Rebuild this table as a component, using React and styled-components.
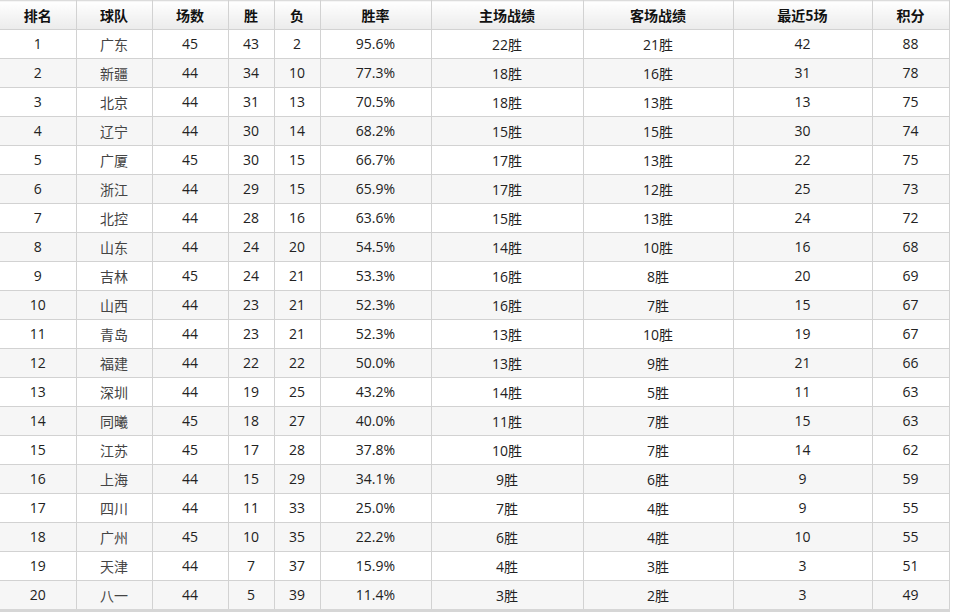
import React from "react";
import styled, { createGlobalStyle } from "styled-components";

const Global = createGlobalStyle`
  html, body { margin: 0; padding: 0; background: #fff; }
  body { font-family: "Open Sans", "Noto Sans CJK SC", sans-serif; }
`;

const cols = [76, 76, 76, 46, 46, 111, 152, 150, 139, 77];
const heads = ["排名", "球队", "场数", "胜", "负", "胜率", "主场战绩", "客场战绩", "最近5场", "积分"];

const data = [
  [1, "广东", 45, 43, 2, "95.6%", "22胜", "21胜", 42, 88],
  [2, "新疆", 44, 34, 10, "77.3%", "18胜", "16胜", 31, 78],
  [3, "北京", 44, 31, 13, "70.5%", "18胜", "13胜", 13, 75],
  [4, "辽宁", 44, 30, 14, "68.2%", "15胜", "15胜", 30, 74],
  [5, "广厦", 45, 30, 15, "66.7%", "17胜", "13胜", 22, 75],
  [6, "浙江", 44, 29, 15, "65.9%", "17胜", "12胜", 25, 73],
  [7, "北控", 44, 28, 16, "63.6%", "15胜", "13胜", 24, 72],
  [8, "山东", 44, 24, 20, "54.5%", "14胜", "10胜", 16, 68],
  [9, "吉林", 45, 24, 21, "53.3%", "16胜", "8胜", 20, 69],
  [10, "山西", 44, 23, 21, "52.3%", "16胜", "7胜", 15, 67],
  [11, "青岛", 44, 23, 21, "52.3%", "13胜", "10胜", 19, 67],
  [12, "福建", 44, 22, 22, "50.0%", "13胜", "9胜", 21, 66],
  [13, "深圳", 44, 19, 25, "43.2%", "14胜", "5胜", 11, 63],
  [14, "同曦", 45, 18, 27, "40.0%", "11胜", "7胜", 15, 63],
  [15, "江苏", 45, 17, 28, "37.8%", "10胜", "7胜", 14, 62],
  [16, "上海", 44, 15, 29, "34.1%", "9胜", "6胜", 9, 59],
  [17, "四川", 44, 11, 33, "25.0%", "7胜", "4胜", 9, 55],
  [18, "广州", 45, 10, 35, "22.2%", "6胜", "4胜", 10, 55],
  [19, "天津", 44, 7, 37, "15.9%", "4胜", "3胜", 3, 51],
  [20, "八一", 44, 5, 39, "11.4%", "3胜", "2胜", 3, 49],
];

const Table = styled.table`
  width: 949px;
  table-layout: fixed;
  border-collapse: collapse;
  border-top: 1px solid #dcdcdc;
  border-bottom: 3px solid #d6d6d6;
  font-size: 14px;
  color: #2a2a2a;
`;

const HeadCell = styled.th`
  height: 27px;
  padding: 0 0 1px;
  font-weight: 700;
  font-size: 14px;
  color: #111;
  text-align: center;
  background: linear-gradient(#ffffff, #ebebeb);
  border-right: 1px solid #d2d2d2;
  border-bottom: 1px solid #d2d2d2;
  font-family: "Noto Sans CJK SC", sans-serif;
`;

const Row = styled.tr`
  background: ${(p) => (p.$alt ? "#f6f6f6" : "#ffffff")};
`;

const Cell = styled.td`
  height: 27px;
  padding: 0 0 1px;
  text-align: center;
  border-right: 1px solid #d2d2d2;
  border-bottom: 1px solid #d2d2d2;
  color: ${(p) => (p.$team ? "#444" : "#222")};
  font-family: ${(p) => (p.$team ? '"Noto Sans CJK SC", sans-serif' : '"Open Sans", "Noto Sans CJK SC", sans-serif')};
`;

export default function App() {
  return (
    <>
      <Global />
      <Table>
        <colgroup>
          {cols.map((w, i) => (
            <col key={i} style={{ width: w }} />
          ))}
        </colgroup>
        <thead>
          <tr>
            {heads.map((h) => (
              <HeadCell key={h}>{h}</HeadCell>
            ))}
          </tr>
        </thead>
        <tbody>
          {data.map((r, i) => (
            <Row key={r[0]} $alt={i % 2 === 1}>
              {r.map((v, j) => (
                <Cell key={j} $team={j === 1}>
                  {v}
                </Cell>
              ))}
            </Row>
          ))}
        </tbody>
      </Table>
    </>
  );
}
